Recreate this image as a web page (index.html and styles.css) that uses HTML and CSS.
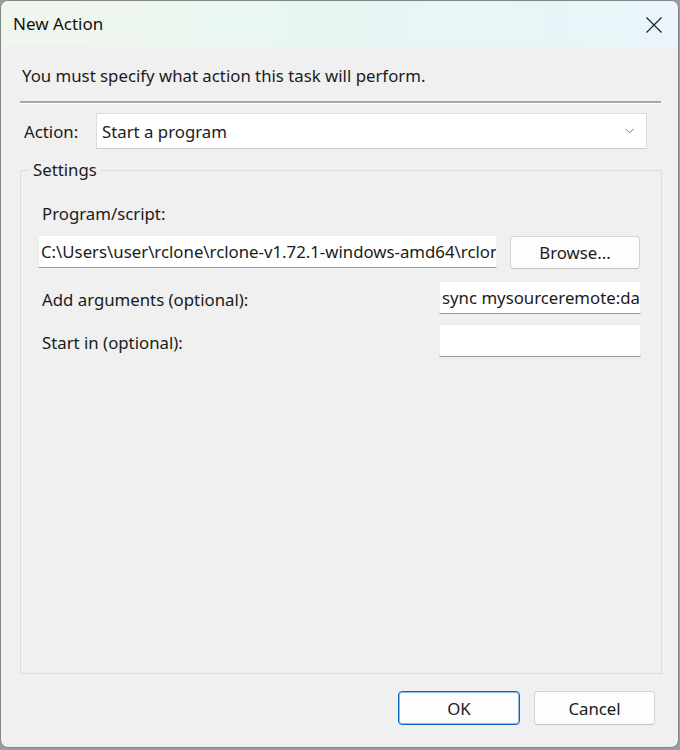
FILE: index.html
```html
<!DOCTYPE html>
<html>
<head>
    <title>New Action</title>
    <link rel="stylesheet" href="styles.css">
</head>
<body>
    <div class="window">
        <div class="titlebar">
            <span class="title">New Action</span>
            <svg class="close" width="16" height="16" viewBox="0 0 16 16">
                <path d="M0.5 0.5 L15.5 15.5 M15.5 0.5 L0.5 15.5" stroke="#1a1a1a" stroke-width="1.1" fill="none"/>
            </svg>
        </div>
        <div class="content">
            <div class="intro">You must specify what action this task will perform.</div>
            <div class="sep"></div>

            <div class="action-row">
                <span class="label">Action:</span>
                <div class="combo">
                    <span>Start a program</span>
                    <svg width="9" height="6" viewBox="0 0 9 6">
                        <path d="M0.5 0.8 L4.5 4.8 L8.5 0.8" stroke="#777" stroke-width="1" fill="none"/>
                    </svg>
                </div>
            </div>

            <fieldset class="settings">
                <legend>Settings</legend>
                <div class="field-label">Program/script:</div>
                <div class="program-row">
                    <input class="text program" value="C:\Users\user\rclone\rclone-v1.72.1-windows-amd64\rclone.exe">
                    <button class="btn browse">Browse...</button>
                </div>
                <div class="opt-row">
                    <span class="field-label">Add arguments (optional):</span>
                    <input class="text short" value="sync mysourceremote:data mydestremote:backup">
                </div>
                <div class="opt-row">
                    <span class="field-label">Start in (optional):</span>
                    <input class="text short" value="">
                </div>
            </fieldset>

            <div class="buttons">
                <button class="btn ok">OK</button>
                <button class="btn cancel">Cancel</button>
            </div>
        </div>
    </div>
</body>
</html>
```

FILE: styles.css
```css
* {
    margin: 0;
    padding: 0;
    box-sizing: border-box
}

body {
    background-color: #9c9c9c;
    font-family: "Noto Sans", "Open Sans", sans-serif;
    font-size: 16.8px;
    color: #1b1b1b;
    width: 680px;
    height: 750px;
    overflow: hidden
}

.window {
    width: 679px;
    height: 748px;
    background-color: #f0f0f0;
    border: 1px solid #858585;
    border-radius: 8px;
    overflow: hidden;
    display: flex;
    flex-direction: column
}

.titlebar {
    height: 45px;
    display: flex;
    align-items: center;
    justify-content: space-between;
    padding-left: 12px;
    padding-right: 16px;
    background: linear-gradient(90deg, #f0f6ec 0%, #e7f6f3 50%, #e9f5fb 100%)
}

.title {
    font-size: 17px;
    color: #111
}

.close {
    margin-top: 2px
}

.content {
    flex: 1;
    padding: 19px 16px 0 19px;
    display: flex;
    flex-direction: column
}

.intro {
    padding-left: 2px;
    line-height: 22px
}

.sep {
    margin-top: 14px;
    height: 3px;
    border-top: 2px solid #a8a8a8;
    border-bottom: 1px solid #ffffff;
    margin-right: 1px
}

.action-row {
    margin-top: 9px;
    display: flex;
    align-items: center
}

.action-row .label {
    width: 76px;
    padding-left: 4px
}

.combo {
    width: 551px;
    height: 36px;
    background-color: #fff;
    border: 1px solid #dcdcdc;
    border-bottom-color: #cfcfcf;
    display: flex;
    align-items: center;
    justify-content: space-between;
    padding-left: 5px;
    padding-right: 12px
}

.settings {
    margin-top: 11px;
    height: 514px;
    border: 1px solid #dcdcdc;
    padding: 23px 20px 0 17px
}

.settings legend {
    margin-left: -9px;
    padding: 0 4px;
    line-height: 20px
}

.field-label {
    padding-left: 4px;
    line-height: 22px
}

.program-row {
    margin-top: 9px;
    display: flex;
    align-items: center
}

.text {
    font-family: "Noto Sans", "Open Sans", sans-serif;
    font-size: 16.8px;
    color: #1b1b1b;
    height: 33px;
    background-color: #fff;
    border: 1px solid #ececec;
    border-bottom: 1px solid #9a9a9a;
    padding: 0 0 0 2px;
    outline: none
}

.program {
    width: 459px
}

.btn {
    font-family: "Noto Sans", "Open Sans", sans-serif;
    font-size: 16.8px;
    color: #1b1b1b;
    width: 122px;
    height: 34px;
    background-color: #fdfdfd;
    border: 1px solid #d3d3d3;
    border-bottom-color: #c2c2c2;
    border-radius: 4px
}

.browse {
    width: 130px;
    height: 33px;
    margin-left: 13px;
    margin-top: 2px
}

.opt-row {
    margin-top: 12px;
    display: flex;
    align-items: center;
    justify-content: space-between
}

.opt-row .field-label {
    margin-top: 4px
}

.opt-row + .opt-row {
    margin-top: 10px
}

.short {
    width: 202px
}

.buttons {
    margin-top: 17px;
    display: flex;
    justify-content: flex-end;
    gap: 14px;
    padding-right: 7px
}

.cancel {
    width: 121px
}

.ok {
    border: 1px solid #0b67c2;
    box-shadow: inset 0 0 0 1px #8fbbe6
}
```
